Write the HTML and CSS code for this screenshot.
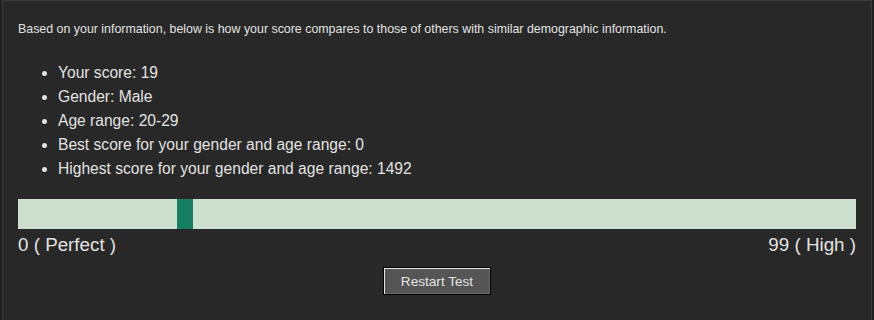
FILE: index.html
```html
<!DOCTYPE html>
<html lang="en">
<head>
  <meta charset="UTF-8" />
  <title>Score comparison</title>
  <link rel="stylesheet" href="styles.css">
</head>
<body>
  <div class="panel">
    <p class="intro">Based on your information, below is how your score compares to those of others with similar demographic information.</p>

    <ul class="stats">
      <li>Your score: 19</li>
      <li>Gender: Male</li>
      <li>Age range: 20-29</li>
      <li>Best score for your gender and age range: 0</li>
      <li>Highest score for your gender and age range: 1492</li>
    </ul>

    <div class="scale">
      <div class="scale-bar">
        <span class="marker" style="left: 19%"></span>
      </div>
      <div class="scale-labels">
        <span>0 ( Perfect )</span>
        <span>99 ( High )</span>
      </div>
    </div>

    <div class="actions">
      <button class="restart">Restart Test</button>
    </div>
  </div>
</body>
</html>
```

FILE: styles.css
```css
body {
  margin: 0;
  background: #202020;
  font-family: "Liberation Sans", Arial, sans-serif;
  color: #e2e2e2;
}

.panel {
  box-sizing: border-box;
  margin: 0 2px;
  height: 320px;
  background: #282828;
  border: 1px solid #3c3c3c;
  border-bottom: none;
  padding: 20px 15px 0;
}

.intro {
  margin: 0;
  font-size: 12.4px;
  line-height: 16px;
}

.stats {
  margin: 24px 0 0;
  padding-left: 40px;
  font-size: 15.6px;
  line-height: 24px;
}

.scale {
  margin-top: 18px;
}

.scale-bar {
  position: relative;
  height: 30px;
  background: #cddfcd;
}

.marker {
  position: absolute;
  top: 0;
  width: 16px;
  height: 100%;
  background: #167f63;
}

.scale-labels {
  display: flex;
  justify-content: space-between;
  font-size: 18.8px;
  line-height: 24px;
  margin-top: 4px;
}

.actions {
  text-align: center;
  margin-top: 10px;
}

.restart {
  width: 108px;
  height: 28px;
  padding: 0;
  font-family: "Liberation Sans", Arial, sans-serif;
  font-size: 13.6px;
  color: #e4e4e4;
  background: #555555;
  border: 1px solid #000;
  box-shadow: inset 1px 1px 0 #e8e8e8, inset -1px -1px 0 #6a6a6a;
}
```
